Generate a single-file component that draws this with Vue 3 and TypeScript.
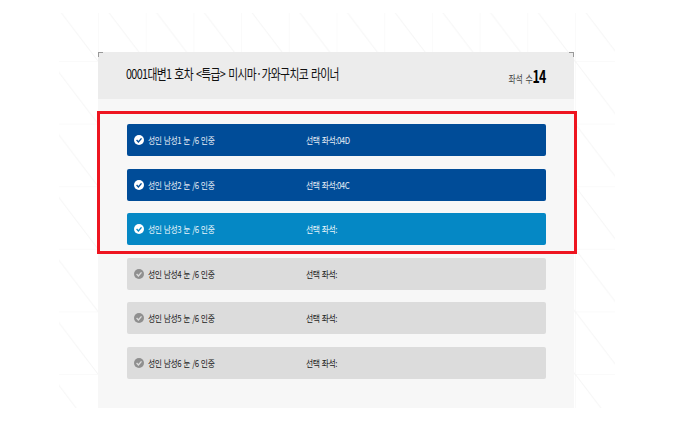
<template>
  <div class="page">
    <!-- 배경 패턴 -->
    <svg class="pattern" width="556" height="395" aria-hidden="true">
      <defs>
        <pattern id="tile" x="39" y="48" width="47.7" height="62.6" patternUnits="userSpaceOnUse">
          <path d="M0 0H47.7M0 0V62.6M0 0L47.7 62.6" fill="none" stroke="#f5f5f5" stroke-width="1" />
        </pattern>
      </defs>
      <rect width="556" height="395" fill="url(#tile)" />
    </svg>

    <div class="panel">
      <i class="corner corner-left"></i>
      <i class="corner corner-right"></i>

      <div class="header">
        <div class="train">0001대변1 호차 &lt;특급&gt; 미시마·가와구치코 라이너</div>
        <div class="seat-count">좌석 수<strong>14</strong></div>
      </div>

      <div class="rows">
        <div v-for="row in rows" :key="row.no" class="row" :class="row.state">
          <svg class="check" width="10" height="10" viewBox="0 0 10 10" aria-hidden="true">
            <circle cx="5" cy="5" r="5" class="check-bg" />
            <path d="M2.6 5.1L4.4 6.9L7.5 3.4" fill="none" class="check-mark" stroke-width="1.4" />
          </svg>
          <span class="who">성인 남성{{ row.no }} 눈 /6 인중</span>
          <span class="seat">선택 좌석:<b v-if="row.seat">{{ row.seat }}</b></span>
        </div>
      </div>

      <!-- 강조 표시 -->
      <div class="highlight"></div>
    </div>
  </div>
</template>

<script setup lang="ts">
interface Row {
  no: number
  state: 'done' | 'active' | 'idle'
  seat?: string
}

const rows: Row[] = [
  { no: 1, state: 'done', seat: '04D' },
  { no: 2, state: 'done', seat: '04C' },
  { no: 3, state: 'active' },
  { no: 4, state: 'idle' },
  { no: 5, state: 'idle' },
  { no: 6, state: 'idle' }
]
</script>

<style scoped>
.page {
  position: relative;
  width: 674px;
  height: 421px;
  padding: 52px 100px 0 98px;
  box-sizing: border-box;
  overflow: hidden;
  background: #fff;
  font-family: "Noto Sans CJK KR", "Liberation Sans", sans-serif;
}

.pattern {
  position: absolute;
  top: 13px;
  left: 59px;
}

.panel {
  position: relative;
  width: 476px;
  height: 356px;
  background: #f7f7f7;
}

.corner {
  position: absolute;
  top: 0;
  width: 4px;
  height: 4px;
  border-top: 1px solid #999;
}

.corner-left {
  left: 0;
  border-left: 1px solid #999;
}

.corner-right {
  right: 0;
  border-right: 1px solid #999;
}

.header {
  height: 47px;
  background: #ececec;
  padding: 0 28px;
  display: flex;
  justify-content: space-between;
  color: #222;
}

/* 원본 글자가 좁게 눌려 있어 가로로 줄임 */
.train {
  font-size: 13.5px;
  line-height: 43px;
  letter-spacing: -0.8px;
  word-spacing: 1.5px;
  color: #111;
  white-space: nowrap;
  transform: scaleX(0.8);
  transform-origin: left center;
}

.seat-count {
  font-size: 10.5px;
  line-height: 49px;
  letter-spacing: -0.3px;
  word-spacing: 2px;
  color: #444;
  white-space: nowrap;
  transform: scaleX(0.75);
  transform-origin: right center;
}

.seat-count strong {
  font-size: 16.5px;
  color: #000;
  letter-spacing: -1px;
}

.rows {
  padding: 25px 28.5px 0 29px;
  display: flex;
  flex-direction: column;
  gap: 12.5px;
}

.row {
  height: 32px;
  border-radius: 2px;
  display: flex;
  align-items: center;
  padding-left: 7px;
  font-size: 9.5px;
  letter-spacing: -0.5px;
  word-spacing: 1px;
  white-space: nowrap;
}

.done {
  background: #004c98;
  color: #e6edf5;
}

.active {
  background: #0588c5;
  color: #eaf6fb;
}

.idle {
  background: #dcdcdc;
  color: #222;
}

.check {
  flex: none;
}

.check-bg {
  fill: #fff;
}

.check-mark {
  stroke: #004c98;
}

.active .check-mark {
  stroke: #0588c5;
}

.idle .check-bg {
  fill: #8f8f8f;
}

.idle .check-mark {
  stroke: #dcdcdc;
}

.who {
  margin-left: 4px;
  width: 158px;
  transform: scaleX(0.82);
  transform-origin: left center;
}

.seat {
  transform: scaleX(0.82);
  transform-origin: left center;
}

.seat b {
  font-weight: 400;
}

.highlight {
  position: absolute;
  top: 59px;
  left: -1px;
  width: 480px;
  height: 143px;
  box-sizing: border-box;
  border: 3px solid #ee1520;
}
</style>
